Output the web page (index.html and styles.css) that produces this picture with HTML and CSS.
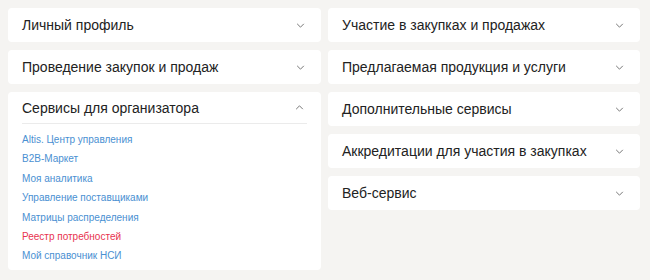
FILE: index.html
```html
<!DOCTYPE html>
<html lang="ru">
<head>
    <meta charset="UTF-8">
    <title>Меню сервисов</title>
    <link rel="stylesheet" href="styles.css">
</head>
<body>
    <div class="menu">
        <div class="column">
            <div class="card">
                <div class="card-head">
                    <span>Личный профиль</span>
                    <svg class="chevron" viewBox="0 0 10 6"><path d="M1 1l4 4 4-4"/></svg>
                </div>
            </div>
            <div class="card">
                <div class="card-head">
                    <span>Проведение закупок и продаж</span>
                    <svg class="chevron" viewBox="0 0 10 6"><path d="M1 1l4 4 4-4"/></svg>
                </div>
            </div>
            <div class="card open">
                <div class="card-head">
                    <span>Сервисы для организатора</span>
                    <svg class="chevron" viewBox="0 0 10 6"><path d="M1 5l4-4 4 4"/></svg>
                </div>
                <ul class="links">
                    <li><a href="#">Altis. Центр управления</a></li>
                    <li><a href="#">B2B-Маркет</a></li>
                    <li><a href="#">Моя аналитика</a></li>
                    <li><a href="#">Управление поставщиками</a></li>
                    <li><a href="#">Матрицы распределения</a></li>
                    <li><a href="#" class="active">Реестр потребностей</a></li>
                    <li><a href="#">Мой справочник НСИ</a></li>
                </ul>
            </div>
        </div>
        <div class="column">
            <div class="card">
                <div class="card-head">
                    <span>Участие в закупках и продажах</span>
                    <svg class="chevron" viewBox="0 0 10 6"><path d="M1 1l4 4 4-4"/></svg>
                </div>
            </div>
            <div class="card">
                <div class="card-head">
                    <span>Предлагаемая продукция и услуги</span>
                    <svg class="chevron" viewBox="0 0 10 6"><path d="M1 1l4 4 4-4"/></svg>
                </div>
            </div>
            <div class="card">
                <div class="card-head">
                    <span>Дополнительные сервисы</span>
                    <svg class="chevron" viewBox="0 0 10 6"><path d="M1 1l4 4 4-4"/></svg>
                </div>
            </div>
            <div class="card">
                <div class="card-head">
                    <span>Аккредитации для участия в закупках</span>
                    <svg class="chevron" viewBox="0 0 10 6"><path d="M1 1l4 4 4-4"/></svg>
                </div>
            </div>
            <div class="card">
                <div class="card-head">
                    <span>Веб-сервис</span>
                    <svg class="chevron" viewBox="0 0 10 6"><path d="M1 1l4 4 4-4"/></svg>
                </div>
            </div>
        </div>
    </div>
</body>
</html>
```
FILE: styles.css
```css
body {
    margin: 0;
    background-color: #f5f4f2;
    font-family: "Liberation Sans", Arial, sans-serif;
    color: #222;
}
.menu {
    display: grid;
    grid-template-columns: 313px 312px;
    gap: 7px;
    padding: 8px 10px 8px 8px;
}
.column {
    display: flex;
    flex-direction: column;
    gap: 8px;
}
.card {
    background-color: #fff;
    border-radius: 4px;
}
.card-head {
    display: flex;
    align-items: center;
    justify-content: space-between;
    height: 34px;
    padding: 0 16px 0 14px;
    font-size: 14px;
}
.chevron {
    width: 9px;
    height: 5px;
    fill: none;
    stroke: #777;
    stroke-width: 1.2;
}
.card.open .card-head {
    height: 31px;
    margin: 0 14px;
    padding: 0 3px 0 0;
    border-bottom: 1px solid #ebebeb;
}
.links {
    list-style: none;
    margin: 0;
    padding: 6px 14px 4px;
}
.links li {
    font-size: 10px;
    line-height: 19.4px;
}
.links a {
    color: #4a90d2;
    text-decoration: none;
}
.links a.active {
    color: #e8334f;
}
```
